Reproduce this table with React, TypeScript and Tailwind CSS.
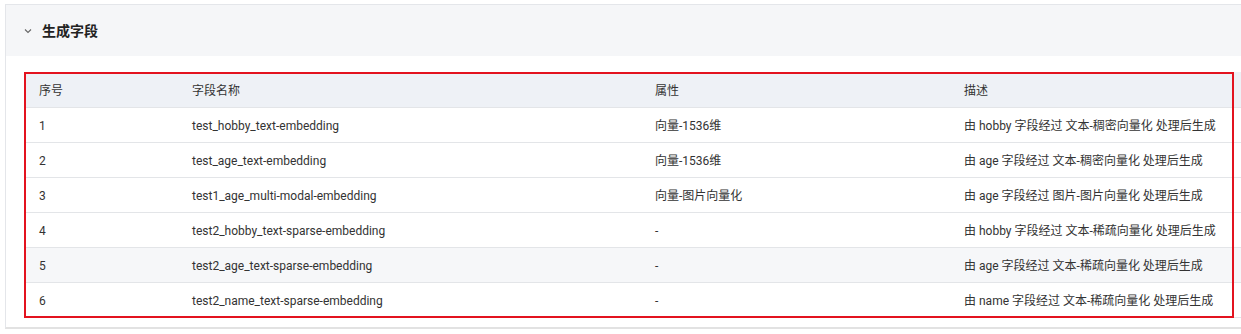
import React from 'react'

const rows = [
  { id: 1, name: 'test_hobby_text-embedding', attr: '向量-1536维', desc: '由 hobby 字段经过 文本-稠密向量化 处理后生成' },
  { id: 2, name: 'test_age_text-embedding', attr: '向量-1536维', desc: '由 age 字段经过 文本-稠密向量化 处理后生成' },
  { id: 3, name: 'test1_age_multi-modal-embedding', attr: '向量-图片向量化', desc: '由 age 字段经过 图片-图片向量化 处理后生成' },
  { id: 4, name: 'test2_hobby_text-sparse-embedding', attr: '-', desc: '由 hobby 字段经过 文本-稀疏向量化 处理后生成' },
  { id: 5, name: 'test2_age_text-sparse-embedding', attr: '-', desc: '由 age 字段经过 文本-稀疏向量化 处理后生成' },
  { id: 6, name: 'test2_name_text-sparse-embedding', attr: '-', desc: '由 name 字段经过 文本-稀疏向量化 处理后生成' },
]

export default function App() {
  return (
    <div
      className="w-[1241px] h-[334px] overflow-hidden bg-white pl-[5px] pt-[4px]"
      style={{ fontFamily: 'Roboto, "Noto Sans CJK SC", sans-serif' }}
    >
      <div className="w-[1260px] border border-[#e4e6ea] border-b-[2px] border-b-[#e2e2e2]">
        {/* Header */}
        <div className="h-[51px] bg-[#f5f6f8] flex items-center pl-[18px] gap-[10px]">
          <svg width="8" height="6" viewBox="0 0 8 6" className="mt-[1px]">
            <path d="M1 1.5 L4 4.5 L7 1.5" fill="none" stroke="#666" strokeWidth="1.1" />
          </svg>
          <span className="text-[14px] font-bold text-[#222] leading-none">生成字段</span>
        </div>

        {/* Body */}
        <div className="pl-[18px] pt-[16px] pb-[9px]">
          <div className="relative">
            <table className="w-[1230px] border-collapse text-[12px] text-[#333] table-fixed">
              <colgroup>
                <col className="w-[155px]" />
                <col className="w-[463px]" />
                <col className="w-[309px]" />
                <col />
              </colgroup>
              <thead>
                <tr className="h-[35px] bg-[#eef1f6] border-b border-[#e3e5e8]">
                  <th className="text-left font-normal pl-[15px] pt-[3px]">序号</th>
                  <th className="text-left font-normal pl-[13px] pt-[3px]">字段名称</th>
                  <th className="text-left font-normal pl-[13px] pt-[3px]">属性</th>
                  <th className="text-left font-normal pl-[13px] pt-[3px]">描述</th>
                </tr>
              </thead>
              <tbody>
                {rows.map((r) => (
                  <tr
                    key={r.id}
                    className={`h-[35px] border-b border-[#e3e5e8] ${r.id === 5 ? 'bg-[#f6f7f9]' : 'bg-white'}`}
                  >
                    <td className="pl-[15px] pt-[2px]">{r.id}</td>
                    <td className="pl-[13px] pt-[2px]">{r.name}</td>
                    <td className="pl-[13px] pt-[2px]">{r.attr}</td>
                    <td className="pl-[13px] pt-[2px]">{r.desc}</td>
                  </tr>
                ))}
              </tbody>
            </table>
            {/* annotation box */}
            <div className="absolute left-0 top-0 w-[1210px] h-[246px] border-2 border-[#e3131f] pointer-events-none" />
          </div>
        </div>
      </div>
    </div>
  )
}
